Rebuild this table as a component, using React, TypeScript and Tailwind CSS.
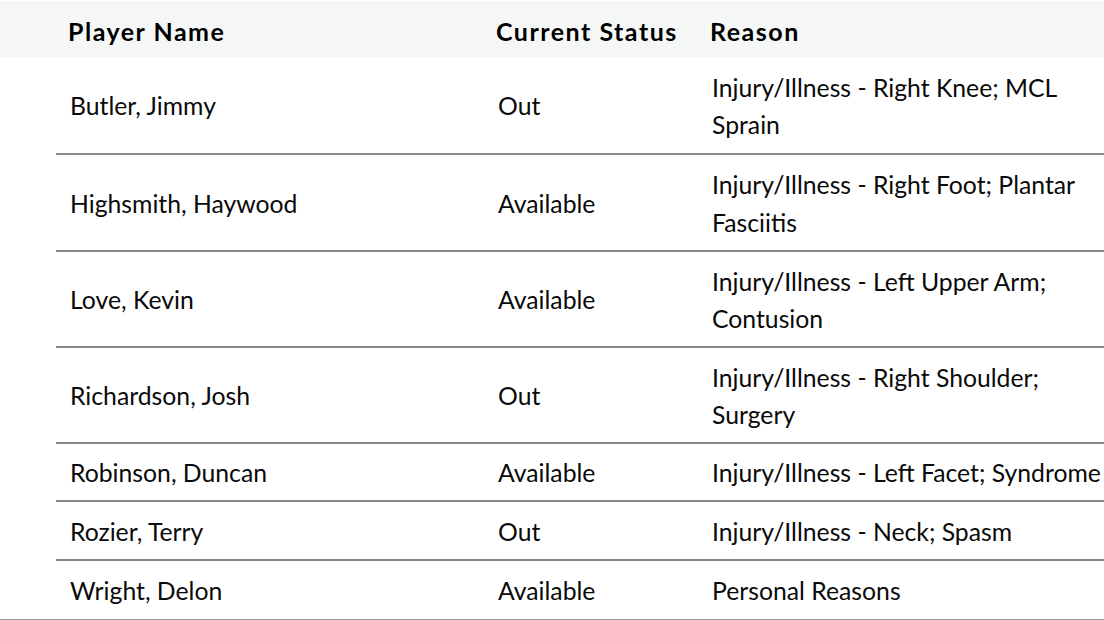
import React from "react";

type Row = { name: string; status: string; reason: React.ReactNode; h: string };

const rows: Row[] = [
  { name: "Butler, Jimmy", status: "Out", reason: <>Injury/Illness - Right Knee; MCL<br />Sprain</>, h: "h-[98px]" },
  { name: "Highsmith, Haywood", status: "Available", reason: <>Injury/Illness - Right Foot; Plantar<br />Fasciitis</>, h: "h-[97px]" },
  { name: "Love, Kevin", status: "Available", reason: <>Injury/Illness - Left Upper Arm;<br />Contusion</>, h: "h-[96px]" },
  { name: "Richardson, Josh", status: "Out", reason: <>Injury/Illness - Right Shoulder;<br />Surgery</>, h: "h-[96px]" },
  { name: "Robinson, Duncan", status: "Available", reason: "Injury/Illness - Left Facet; Syndrome", h: "h-[58px]" },
  { name: "Rozier, Terry", status: "Out", reason: "Injury/Illness - Neck; Spasm", h: "h-[59px]" },
  { name: "Wright, Delon", status: "Available", reason: "Personal Reasons", h: "h-[59px]" },
];

export default function App() {
  return (
    <div
      className="w-[1104px] h-[620px] overflow-hidden bg-white text-[#0a0a0a]"
      style={{ fontFamily: "Lato, 'Noto Sans', sans-serif" }}
    >
      <div className="h-px bg-white" />
      <div className="flex h-[56px] items-center bg-[#f5f7f7] pt-[6px] text-[25px] font-bold tracking-[1.5px] text-black">
        <div className="w-[56px] shrink-0" />
        <div className="w-[429px] shrink-0 pl-[12px]">Player Name</div>
        <div className="w-[213px] shrink-0 pl-[11px]">Current Status</div>
        <div className="flex-1 pl-[12px]">Reason</div>
      </div>
      {rows.map((r, i) => {
        const last = i === rows.length - 1;
        return (
          <div key={r.name} className={(last ? "border-b border-[#9a9a9a] " : "") + "flex box-border " + r.h}>
            <div className="w-[56px] shrink-0" />
            <div
              className={
                (last ? "" : "border-b-2 border-[#8a8a8a] ") +
                "flex flex-1 items-center pt-[2px] text-[24.75px] leading-[37.5px]"
              }
            >
              <div className="w-[429px] shrink-0 pl-[14px] whitespace-nowrap">{r.name}</div>
              <div className="w-[213px] shrink-0 pl-[13px] whitespace-nowrap">{r.status}</div>
              <div className="flex-1 pl-[14px] whitespace-nowrap">{r.reason}</div>
            </div>
          </div>
        );
      })}
    </div>
  );
}
